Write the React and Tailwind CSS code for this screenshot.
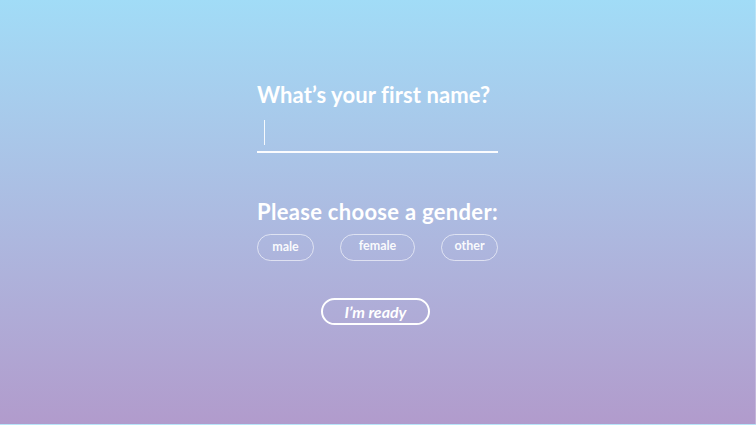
import { useState } from "react";

const App = () => {
  const [gender, setGender] = useState("");

  const pill =
    "h-[27px] rounded-full border border-white/60 text-[12.5px] font-bold text-white/95 flex items-center justify-center";

  return (
    <div
      className="w-full h-[425px] bg-gradient-to-b from-[#a1dcf7] to-[#b19bcc] border-r border-b border-white/25 overflow-hidden"
      style={{ fontFamily: "Lato, 'Open Sans', sans-serif" }}
    >
      <div className="mx-auto w-[241px] pt-[80px] flex flex-col">
        {/* nombre */}
        <h1 className="text-[22px] leading-[30px] font-bold text-white tracking-[0.1px]">
          What’s your first name?
        </h1>
        <div className="mt-[8px] h-[35px] border-b-2 border-white/95 flex items-start pl-[7px] pt-[2px]">
          <span className="block w-px h-[25px] bg-white/90"></span>
        </div>

        {/* genero */}
        <h2 className="mt-[44px] text-[22px] leading-[30px] font-bold text-white tracking-[0.3px]">
          Please choose a gender:
        </h2>
        <div className="mt-[7px] flex justify-between">
          <button className={`${pill} w-[57px]`} onClick={() => setGender("male")}>
            male
          </button>
          <button className={`${pill} w-[75px] pb-[2px]`} onClick={() => setGender("female")}>
            female
          </button>
          <button className={`${pill} w-[57px] pb-[2px]`} onClick={() => setGender("other")}>
            other
          </button>
        </div>

        {/* listo */}
        <div className="mt-[37px] flex justify-center pr-[4px]">
          <button className="w-[109px] h-[27px] rounded-full border-2 border-white text-[16px] font-bold italic text-white flex items-center justify-center">
            I’m ready
          </button>
        </div>
      </div>
    </div>
  );
};

export default App;
